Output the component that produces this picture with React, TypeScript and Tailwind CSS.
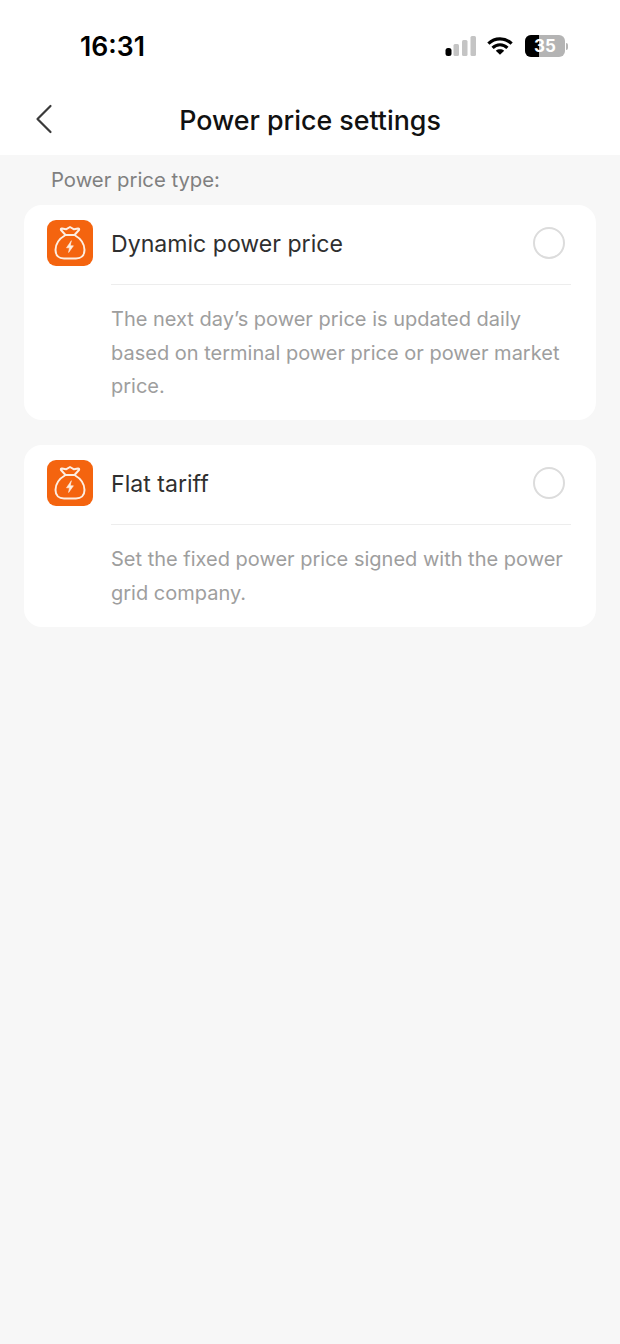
const font = "font-['Inter','Roboto',sans-serif]";

function MoneyBagIcon() {
  return (
    <div className="w-[46px] h-[46px] rounded-[9px] bg-[#f4640f] flex items-center justify-center shrink-0">
      <svg width="36" height="36" viewBox="0 0 36 36" fill="none" stroke="#fdeee2" strokeWidth="2" strokeLinejoin="round" strokeLinecap="round">
        <path d="M13.5 10 L9 5 C8.5 4 9 3.3 10 3.5 L14 4.3 L18 2 L22 4.3 L26 3.5 C27 3.3 27.5 4 27 5 L22.5 10 Z" />
        <path d="M13.5 10 C7.5 13.5 3.5 19 3.5 25 C3.5 30.5 7 33.5 12 33.5 L24 33.5 C29 33.5 32.5 30.5 32.5 25 C32.5 19 28.5 13.5 22.5 10" />
        <path d="M19.2 16 L14.5 22.8 L17.5 22.8 L16.6 27.5 L21.4 20.8 L18.4 20.8 Z" fill="#fdeee2" strokeWidth="0.6" />
      </svg>
    </div>
  );
}

function OptionCard({ title, lines }: { title: string; lines: string[] }) {
  return (
    <div className="mx-6 bg-white rounded-[18px] pt-[15px] pr-[25px] pb-[16.5px] pl-[23px]">
      <div className="flex gap-[18px]">
        <MoneyBagIcon />
        <div className="flex-1 min-w-0">
          <div className="h-[65px] border-b border-[#ededed] flex items-start justify-between">
            <span className="text-[23.1px] leading-[48px] text-[#2f2f2f]">{title}</span>
            <span className="w-[32px] h-[32px] rounded-full border-2 border-[#dcdcdc] mr-[6px] mt-[7px]" />
          </div>
          <div className="pt-[18px] text-[20px] leading-[33.5px] text-[#9e9e9e]">
            {lines.map((line) => (
              <div key={line} className="whitespace-nowrap">{line}</div>
            ))}
          </div>
        </div>
      </div>
    </div>
  );
}

export default function App() {
  return (
    <div className={`w-[620px] h-[1344px] bg-[#f7f7f7] overflow-hidden ${font}`}>
      {/* status bar */}
      <div className="bg-white h-[155px]">
        <div className="h-[92px] flex justify-between pl-[80px] pr-[52px] pt-[30px]">
          <span className="text-[26.6px] leading-[32px] font-semibold text-black">16:31</span>
          <div className="flex items-center gap-[10px] h-[32px]">
            <svg width="32" height="20" viewBox="0 0 32 20">
              <rect x="0.5" y="12" width="6" height="8" rx="2.5" fill="#000" />
              <rect x="8.5" y="8" width="5.5" height="12" rx="1.5" fill="#c4c4c4" />
              <rect x="17" y="4" width="5.5" height="16" rx="1.5" fill="#c4c4c4" />
              <rect x="25.5" y="0" width="5.5" height="20" rx="1.5" fill="#c4c4c4" />
            </svg>
            <svg width="26" height="20" viewBox="0 0 28 20" fill="none" stroke="#000" strokeWidth="3.4">
              <path d="M1.5 7.5 C8.5 0.5 19.5 0.5 26.5 7.5" />
              <path d="M6 12 C10.5 7.5 17.5 7.5 22 12" />
              <path d="M14 19.5 L9.5 15 C12 13 16 13 18.5 15 Z" fill="#000" stroke="none" />
            </svg>
            <div className="flex items-center gap-[1px] ml-[2px]">
              <div className="relative w-[40px] h-[22px] rounded-[6px] bg-[#b4b4b4] overflow-hidden">
                <div className="absolute inset-y-0 left-0 w-[14px] bg-black" />
                <span className="absolute inset-0 text-center text-[17px] leading-[22px] font-bold text-white">35</span>
              </div>
              <span className="w-[2px] h-[7px] rounded-r-full bg-[#b4b4b4]" />
            </div>
          </div>
        </div>
        {/* header */}
        <div className="relative h-[56px] flex items-center justify-center">
          <svg className="absolute left-[35px] top-[12px]" width="18" height="30" viewBox="0 0 18 30" fill="none" stroke="#3a3a3a" strokeWidth="2.2" strokeLinecap="round" strokeLinejoin="round">
            <path d="M15.5 2 L2.5 15 L15.5 28" />
          </svg>
          <h1 className="text-[26.8px] leading-[56px] font-medium text-[#111111] -mt-[1px]">Power price settings</h1>
        </div>
      </div>

      <div className="pl-[51px] h-[50px] pt-[11px] text-[20.3px] leading-[28px] text-[#808080]">Power price type:</div>

      <div className="flex flex-col gap-[25px]">
        <OptionCard
          title="Dynamic power price"
          lines={[
            'The next day’s power price is updated daily',
            'based on terminal power price or power market',
            'price.',
          ]}
        />
        <OptionCard
          title="Flat tariff"
          lines={['Set the fixed power price signed with the power', 'grid company.']}
        />
      </div>
    </div>
  );
}
